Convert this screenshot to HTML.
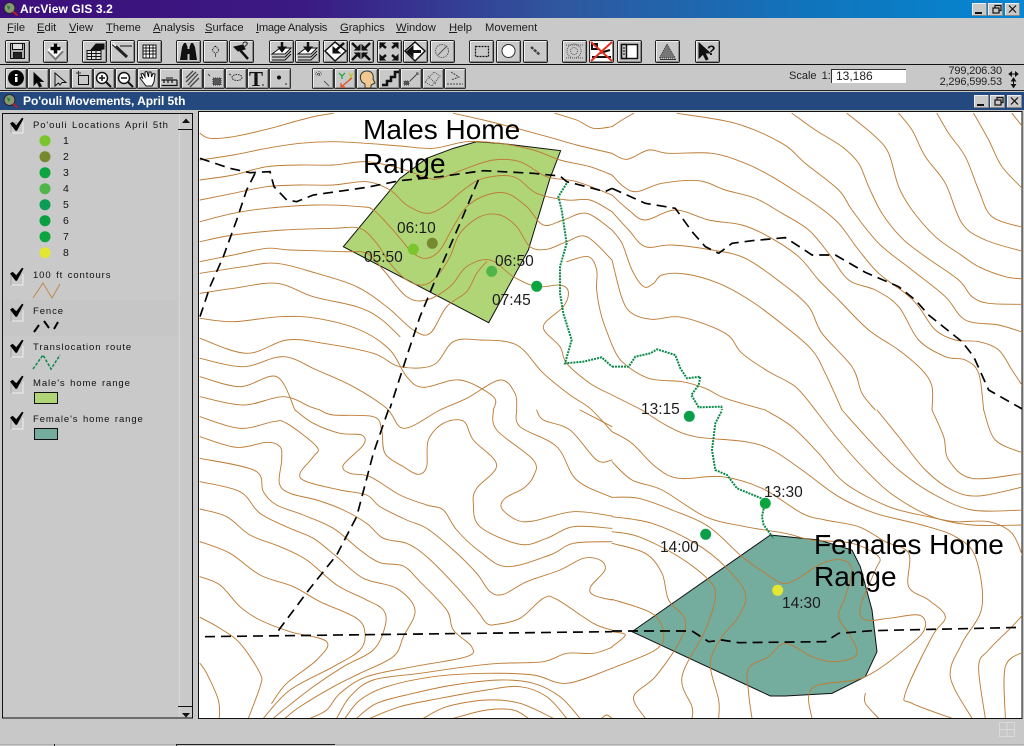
<!DOCTYPE html>
<html><head><meta charset="utf-8"><title>ArcView GIS 3.2</title>
<style>
html,body{margin:0;padding:0;width:1024px;height:746px;overflow:hidden;background:#c8c8c8}
body{position:relative;font-family:"Liberation Sans",sans-serif;color:#111}
.t{position:absolute;white-space:pre;line-height:1}
svg{position:absolute;left:0;top:0}
.m{font-size:11.2px;color:#1c1c1c;top:23px}
.m u{text-decoration-thickness:1px}
.l{font-size:9.5px;letter-spacing:.9px;word-spacing:1px;color:#111;left:33px}
.n{font-size:10.5px;left:63px;color:#111}
.big{font-size:28px;color:#000}
.s{font-size:15.5px;color:#1c1c1c}
</style></head><body>
<svg width="1024" height="746" viewBox="0 0 1024 746" xmlns="http://www.w3.org/2000/svg">
<defs>
<linearGradient id="tg" x1="0" x2="1" y1="0" y2="0"><stop offset="0" stop-color="#3d0f7a"/><stop offset=".3" stop-color="#3b1a84"/><stop offset=".55" stop-color="#2f589f"/><stop offset=".8" stop-color="#0f75bd"/><stop offset="1" stop-color="#0587d2"/></linearGradient>
<clipPath id="mapc"><rect x="199" y="112" width="823" height="606"/></clipPath>
<symbol id="b" viewBox="0 0 25 23" width="25" height="23" overflow="visible"><rect x=".5" y=".5" width="24" height="22" rx="1.5" fill="#c9c9c9" stroke="#222"/><path d="M1.5 21V1.5H23.5" fill="none" stroke="#efefef"/><path d="M2 21.5H23.5V2" fill="none" stroke="#8a8a8a"/></symbol>
<symbol id="c" viewBox="0 0 22 21" width="22" height="21" overflow="visible"><rect x=".5" y=".5" width="21" height="20" rx="1" fill="#c9c9c9" stroke="#333"/><path d="M1.5 19V1.5H20.5" fill="none" stroke="#eee"/><path d="M2 19.5H20.5V2" fill="none" stroke="#929292"/></symbol>
<symbol id="w" viewBox="0 0 15 13" width="15" height="13" overflow="visible"><rect x=".5" y=".5" width="14" height="12" fill="#c9c9c9" stroke="#888"/><path d="M.5 12V.5H14" fill="none" stroke="#eee"/></symbol>
<path id="ck" d="M-2 -1L.7 -2.700L4.300 .7L10 -6.700L11.500 -6L5 6.300H3.500Z" fill="#000"/>
</defs>

<!-- title bars -->
<rect width="1024" height="18" fill="url(#tg)"/>
<rect y="18" width="1024" height="46" fill="#c9c9c9"/>
<rect y="64" width="1024" height="1" fill="#111"/>
<rect y="90" width="1024" height="1" fill="#222"/>
<rect y="92" width="1024" height="18" fill="#23497f"/>
<g transform="translate(9.5,8)"><circle r="5.5" fill="#8a9a70" stroke="#223" /><path d="M-3-3 L1-1 L-1 2Z" fill="#2d7d3f"/><path d="M3.5 3.5L8 7.5" stroke="#b3202a" stroke-width="2"/></g>
<g transform="translate(9.5,100)"><circle r="5.5" fill="#8a9a70" stroke="#223" /><path d="M-3-3 L1-1 L-1 2Z" fill="#2d7d3f"/><path d="M3.5 3.5L8 7.5" stroke="#b3202a" stroke-width="2"/></g>
<use href="#w" x="972" y="3"/><use href="#w" x="988" y="3"/><use href="#w" x="1005" y="3"/>
<use href="#w" x="974" y="95"/><use href="#w" x="990" y="95"/><use href="#w" x="1007" y="95"/>
<g stroke="#111" fill="none" stroke-width="1.2">
<path d="M975 13h7" stroke-width="2"/><rect x="993" y="8" width="6" height="5"/><path d="M995 8V5.5h6v5h-2"/><path d="M1009 5.5l7 7m0-7l-7 7"/>
<path d="M977 105h7" stroke-width="2"/><rect x="995" y="100" width="6" height="5"/><path d="M997 100v-2.500h6v5h-2"/><path d="M1011 97.500l7 7m0-7l-7 7"/>
</g>

<!-- toolbar 1 buttons -->
<g>
<use href="#b" x="5" y="40"/><use href="#b" x="43" y="40"/><use href="#b" x="82" y="40"/><use href="#b" x="110" y="40"/><use href="#b" x="137" y="40"/>
<use href="#b" x="176" y="40"/><use href="#b" x="203" y="40"/><use href="#b" x="229" y="40"/>
<use href="#b" x="269" y="40"/><use href="#b" x="295" y="40"/><use href="#b" x="323" y="40"/><use href="#b" x="349" y="40"/><use href="#b" x="377" y="40"/><use href="#b" x="403" y="40"/><use href="#b" x="430" y="40"/>
<use href="#b" x="469" y="40"/><use href="#b" x="496" y="40"/><use href="#b" x="523" y="40"/>
<use href="#b" x="562" y="40"/><use href="#b" x="589" y="40"/><use href="#b" x="617" y="40"/><use href="#b" x="655" y="40"/><use href="#b" x="695" y="40"/>
</g>
<!-- toolbar 1 icons -->
<g fill="none" stroke="#111">
<path d="M10.500 43.500H24.500V58.500H10.500Z" fill="#aaa"/><rect x="12.500" y="43.500" width="10" height="6" fill="#ddd"/><rect x="13.500" y="52.500" width="8" height="6" fill="#222"/>
<path d="M48 52L55.500 44L63 52L55.500 60Z" fill="#777" stroke="#777"/><path d="M48 50L55.500 43L62 50L55.500 57Z" fill="#fff" stroke="#fff"/><path d="M55.500 43.500v10M50.500 48.500h10" stroke="#000" stroke-width="3.500"/>
<path d="M87 50.500H101V59.500H87Z" fill="#ddd"/><path d="M87 53.500h14M87 56.500h14M91.500 50.500v9M96 50.500v9"/><path d="M91 50L96 44H104V49L98 50Z" fill="#111"/>
<path d="M113 44L127 57" stroke-width="3" stroke="#222"/><path d="M120 46H132"/><path d="M113 43l3 3" stroke="#eee" stroke-width="2"/>
<rect x="143" y="45" width="13" height="13" fill="#fff"/><path d="M143 48h13M143 51h13M143 54h13M146 45v13M149.500 45v13M153 45v13" stroke-width=".9"/>
<g fill="#111" stroke="none"><path d="M180 60L182 47L184 43H186L187.500 47V60Z"/><path d="M189.500 60V47L191 43H193L195 47L197 60Z"/><rect x="186.500" y="49" width="4" height="5"/></g>
<path d="M215.500 46L219 50L215.500 54L212 50Z" stroke-dasharray="1 1"/><path d="M215.500 54v3" stroke="#555"/>
<path d="M234 47L243 45L245 49L238 51Z" fill="#111"/><path d="M240 50L248 59" stroke="#111" stroke-width="2.500"/>
</g>
<text x="242" y="49" font-family="Liberation Sans" font-size="11" fill="#111">?</text>
<g fill="none" stroke="#111">
<path d="M272 54L280 48H291L285 54Z" fill="#fff"/><path d="M272 57H285L291 51M272 60H285L291 54"/><path d="M282 42v8" stroke-width="2.500"/><path d="M278 47L282 52L286 47Z" fill="#111"/>
<path d="M298 54L306 48H317L311 54Z" fill="#fff"/><path d="M298 57H311L317 51M298 60H311L317 54"/><path d="M308 42v8" stroke-width="2.500"/><path d="M304 47L308 52L312 47Z" fill="#111"/>
<path d="M325 51L335 42L346 51L335 61Z" fill="#fff" stroke-width="1.500"/><path d="M344 43L334 52" stroke-width="2.500"/><path d="M333 47V53H340Z" fill="#111"/>
<path d="M352 43L359 50M370 43L363 50M352 60L359 53M370 60L363 53" stroke-width="2.500"/><path d="M360 45v5h-5ZM362 45v5h5ZM360 58v-5h-5ZM362 58v-5h5Z" fill="#111"/>
<path d="M386 48L380 43M392 48L398 43M386 55L380 60M392 55L398 60" stroke-width="2.500"/><path d="M380 43h5l-5 5ZM398 43h-5l5 5ZM380 60h5l-5-5ZM398 60h-5l5-5Z" fill="#111"/>
<path d="M405 51L415 42L425 51L415 61Z" fill="#fff" stroke-width="1.500"/><path d="M410 51.500H421" stroke-width="3"/><path d="M413 46L407 51.500L413 57Z" fill="#111"/>
<circle cx="442" cy="51" r="6.500" stroke="#555" stroke-dasharray="1.500 1"/><path d="M438 55L447 46" stroke="#555"/>
<rect x="475.500" y="46.500" width="13" height="10" stroke-dasharray="2 1" stroke="#111" stroke-width="1.200"/>
<circle cx="508.500" cy="51" r="6.500" fill="#fff" stroke="#333"/>
<path d="M531 47L540 55" stroke="#444" stroke-width="2.500" stroke-dasharray="3 1"/>
<g stroke="#555" stroke-dasharray="1 1"><circle cx="574" cy="51" r="7"/><circle cx="574" cy="51" r="3.500"/><path d="M566 45h17M566 58h17"/></g>
<rect x="591" y="42" width="21" height="19" fill="#fff" stroke="none"/><path d="M592 44h5v5h-5ZM592 57h19M600 53l10-3" stroke="#111" stroke-width="2"/><path d="M591 42L612 61M612 42L591 61" stroke="#e03020" stroke-width="2"/>
<rect x="621.500" y="44.500" width="16" height="14" fill="#fff" stroke-width="1.500"/><rect x="621.500" y="44.500" width="5" height="14" fill="#c9c9c9" stroke-width="1.500"/><path d="M623 48h2M623 51h2M623 54h2"/>
<path d="M659.500 58L667 44L675 58Z" fill="#777" stroke="#333" stroke-dasharray="1 1"/><path d="M660 59.500h16" stroke="#333"/>
<path d="M699 43V58L703 54L706 60L708 59L705 53H710Z" fill="#111" stroke="#111"/>
</g>
<text x="707" y="55" font-family="Liberation Sans" font-size="14" font-weight="bold" fill="#111">?</text>

<!-- toolbar 2 buttons -->
<g>
<use href="#c" x="5" y="68"/><use href="#c" x="27" y="68"/><use href="#c" x="49" y="68"/><use href="#c" x="71" y="68"/><use href="#c" x="93" y="68"/><use href="#c" x="115" y="68"/><use href="#c" x="137" y="68"/><use href="#c" x="159" y="68"/><use href="#c" x="181" y="68"/><use href="#c" x="203" y="68"/><use href="#c" x="225" y="68"/><use href="#c" x="247" y="68"/><use href="#c" x="269" y="68"/>
<use href="#c" x="312" y="68"/><use href="#c" x="334" y="68"/><use href="#c" x="356" y="68"/><use href="#c" x="378" y="68"/><use href="#c" x="400" y="68"/><use href="#c" x="422" y="68"/><use href="#c" x="444" y="68"/>
</g>
<g fill="none" stroke="#111">
<circle cx="16" cy="78" r="7.500" fill="#000"/><rect x="15" y="74" width="2.500" height="2" fill="#fff" stroke="none"/><rect x="15" y="77" width="2.500" height="5" fill="#fff" stroke="none"/>
<path d="M34 73V85L37 82L39.500 87L41.500 86L39 81.500H43Z" fill="#000"/>
<path d="M55 73V86L58.500 83L60 85L62 82.500H66Z" fill="#c9c9c9"/>
<rect x="78.500" y="75.500" width="10" height="9"/><path d="M76 73h5M78.500 71v5" stroke="#333"/>
<circle cx="102" cy="78" r="5.500" fill="#fff" stroke-width="1.500"/><path d="M99 78h6M102 75v6" stroke-width="1.500"/><path d="M106 82l5 5" stroke-width="2"/>
<circle cx="124" cy="78" r="5.500" fill="#fff" stroke-width="1.500"/><path d="M121 78h6" stroke-width="1.500"/><path d="M128 82l5 5" stroke-width="2"/>
<path d="M143 79L141 74L143 73.500L145 77L145 72L147 71.500L148.500 77L149 72L151 72L151.500 77L153 73.500L155 74L154 82L152 86H146L143 82L140 78L142 77Z" fill="#fff" stroke-width="1"/>
<path d="M161.500 80H177M161.500 85.500H177V80M164 80v3M168 80v3M172 80v3" stroke-width="1.200"/><path d="M166 78h7" stroke-width="1"/>
<path d="M186 82L196 72M188 85L198 74M186 78L193 71M190 87L199 78" stroke="#444" stroke-width="1.300"/>
<path d="M213 78h8v7h-8Z" fill="#555" stroke="#333" stroke-dasharray="1 1"/><path d="M208 74l2 2" stroke="#444"/>
<ellipse cx="237" cy="77.500" rx="5" ry="3" stroke-dasharray="1.500 1" stroke="#222"/><path d="M229 74l2 1" stroke="#444"/>
<circle cx="279" cy="77.500" r="1.500" fill="#111"/><path d="M285 84l2 0" stroke="#222"/>
<path d="M262 85h2" stroke="#222"/>
<g stroke="#555"><path d="M316 72l5 4m0-4l-5 4M319 71v6M315 74h8" stroke-dasharray="1 1"/><path d="M324 81l5 5"/></g>
<path d="M339 73l3 3m3-3l-3 3m0 0v3" stroke="#16a030" stroke-width="1.200"/><path d="M349 73l2 3m2-3l-4 7" stroke="#c8c020" stroke-width="1.200"/><path d="M352 78L341 87M341 83V87H345" stroke="#e44a20" stroke-width="1.200"/>
<path d="M362 82C358 76 362 71 367 71C372 71 374 75 373 79L375 83L371 85V88H365V84Z" fill="#f0c890" stroke="#333"/>
<path d="M382 85H387V81H391V77H395V72H399" stroke-width="2.500"/>
<path d="M404 85h5v-4h-5Z" fill="#555" stroke="#444" stroke-dasharray="1 1"/><path d="M410 81L417 74M416 73h2v2" stroke="#444"/>
<g stroke="#555" stroke-dasharray="1 1"><path d="M425 82L434 72L440 76L432 86Z"/><path d="M428 76L436 84"/></g>
<path d="M451 72L459 77L451 80M447 84h16" stroke="#444" stroke-dasharray="2 1"/>
</g>
<text x="249" y="86" font-family="Liberation Serif" font-size="21" font-weight="bold" fill="#111">T</text>

<!-- legend panel -->
<rect x="2.500" y="113.500" width="190" height="604.500" fill="#c9c9c9" stroke="#111"/>
<rect x="4" y="300" width="173" height="36" fill="#c6c6c6"/>
<path d="M179.500 114V717" stroke="#d8d8d8"/>
<path d="M178 129.500H192M178 706.500H192" stroke="#111"/>
<path d="M182 123h8l-4-4.500ZM182 713h8l-4 4.500Z" fill="#111"/>
<g fill="none" stroke="#eee"><path d="M23 122v11H12M23 274v11H12M23 310v11H12M23 346v11H12M23 382v11H12M23 418v11H12"/></g>
<g fill="none" stroke="#a5a5a5"><path d="M11 133v-10h11M11 285v-10h11M11 321v-10h11M11 357v-10h11M11 393v-10h11M11 429v-10h11"/></g>
<use href="#ck" x="12" y="124.500"/><use href="#ck" x="12" y="274.500"/><use href="#ck" x="12" y="310.500"/><use href="#ck" x="12" y="346.500"/><use href="#ck" x="12" y="382.500"/><use href="#ck" x="12" y="418.500"/>
<circle cx="45" cy="140.700" r="5.500" fill="#7ac52b"/><circle cx="45" cy="156.700" r="5.500" fill="#77892f"/><circle cx="45" cy="172.700" r="5.500" fill="#0ba43e"/><circle cx="45" cy="188.700" r="5.500" fill="#4fb548"/><circle cx="45" cy="204.700" r="5.500" fill="#0b9d55"/><circle cx="45" cy="220.700" r="5.500" fill="#0a9f40"/><circle cx="45" cy="236.700" r="5.500" fill="#0ba43e"/><circle cx="45" cy="252.700" r="5.500" fill="#e3e633"/>
<path d="M33 298L43 283L52 298L60 284" fill="none" stroke="#c08a4a"/>
<path d="M34 332L39 325M44 321L49 328M54 329L58 322" fill="none" stroke="#000" stroke-width="2"/>
<path d="M33 369L43 355L51 369L60 355" fill="none" stroke="#0a8a4a" stroke-width="1.500" stroke-dasharray="3 1.500"/>
<rect x="34.500" y="392.500" width="23" height="11" fill="#b0d577" stroke="#111"/>
<rect x="34.500" y="428.500" width="23" height="11" fill="#74ac9e" stroke="#111"/>

<!-- map -->
<rect x="198.500" y="111.500" width="823.500" height="607" fill="#fff" stroke="#111"/>
<g clip-path="url(#mapc)">
<polygon transform="translate(200,110) scale(.33333)" points="430,410 600,205 680,145 760,115 830,95 900,100 1082,122 1050,205 985,420 866,638" fill="#b0d577" stroke="#111" stroke-width="3"/>
<polygon transform="translate(612,410) scale(.33333)" points="60,665 475,375 620,390 720,420 745,470 780,600 795,725 760,800 660,850 520,858 475,858" fill="#74ac9e" stroke="#111" stroke-width="3"/>
<g id="contours" fill="none" stroke="#bd7c36" stroke-width="2.800" stroke-linejoin="round" stroke-linecap="round">
<g transform="translate(200,110) scale(.33333)">
<polyline points="0,70 30,85 100,80 200,58 290,33 350,18 400,10"/>
<polyline points="760,10 850,30 950,55 1060,85 1130,105 1236,130"/>
<polyline points="1065,10 1130,30 1180,55 1236,50"/>
<polyline points="0,150 100,135 200,115 300,100 400,95 500,100 600,108 700,115 800,95 900,100 1000,120 1080,150 1170,170 1236,195"/>
<polyline points="0,210 100,195 200,170 300,165 400,165 500,155 600,175 680,203 720,205 800,175 880,150 960,155 1040,200 1130,215 1236,255"/>
<polyline points="0,270 100,250 200,230 300,225 400,225 500,215 570,240 620,285 680,310 730,290 790,240 850,205 940,200 1010,250 1100,270 1170,270 1236,305"/>
<polyline points="0,335 100,310 200,295 350,285 480,290 520,300 570,350 600,385 640,430 680,445 720,420 760,350 800,290 860,255 920,250 980,290 1030,345 1090,330 1160,310 1236,360"/>
<polyline points="0,395 100,375 250,360 400,355 480,355 530,400 570,460 620,510 670,525 710,500 750,440 780,370 840,320 900,315 950,350 990,410 1040,418 1100,395 1160,380 1236,450"/>
<polyline points="0,455 100,435 200,415 270,420 430,425 500,430 550,480 620,560 680,570 750,530 800,470 870,450 940,500 1010,530 1080,525 1105,545 1090,590 1030,650 1080,710 1100,760 1170,820 1236,855"/>
<polyline points="1100,455 1165,440 1190,480 1190,540 1205,620 1236,705"/>
<polyline points="0,490 130,470 230,460 350,490 470,530 560,590 640,660 690,670 740,590 800,545 830,490 860,455"/>
<polyline points="0,550 100,535 230,520 340,560 470,590 540,625 600,680"/>
<polyline points="0,625 100,635 240,620 350,625 480,660 570,720 620,800 670,832 780,810 880,860 880,900"/>
<polyline points="0,685 140,730 260,690 370,700 520,730 600,770 700,765 760,695 840,690 950,705 1030,790 1110,855 1170,895 1236,965"/>
<polyline points="0,745 130,770 250,740 350,780 460,830 560,895 612,955 720,900 800,865 900,810 945,850 950,900"/>
<polyline points="0,800 120,830 230,800 285,900"/>
<polyline points="0,860 130,885 250,860 330,890 360,900"/>
</g>
<g transform="translate(612,110) scale(.33333)">
<polyline points="0,50 30,30 65,10"/>
<polyline points="195,10 370,40 510,100 580,160 680,240 720,300 800,400 900,480 1000,560 1060,630 1160,645 1236,668"/>
<polyline points="540,10 610,60 690,110 740,160 770,230 810,310 870,385 940,440 1040,510 1080,560 1130,580 1236,583"/>
<polyline points="705,10 790,80 830,130 860,230 900,300 970,380 1040,430 1100,470 1180,500 1236,507"/>
<polyline points="860,10 900,60 940,140 1000,220 1050,340 1120,390 1236,425"/>
<polyline points="975,10 1010,70 1060,140 1100,240 1140,320 1236,353"/>
<polyline points="1085,10 1130,90 1170,170 1236,240"/>
<polyline points="1200,10 1236,55"/>
<polyline points="0,130 45,148 110,120 170,130 300,130 400,160 480,200 560,250 620,290 680,340 740,420 800,490 880,550 920,590 970,660 1030,690 1100,695 1160,720 1200,780 1236,835"/>
<polyline points="0,195 35,230 75,245 150,220 260,212 340,240 430,265 510,310 590,360 650,430 710,510 790,540 860,590 920,690 1000,740 1060,750 1100,790 1115,900"/>
<polyline points="0,255 50,300 100,330 190,300 290,330 390,345 470,380 560,440 620,510 680,570 770,660 860,720 930,780 960,830 960,900"/>
<polyline points="0,305 50,360 100,410 180,405 300,420 400,445 510,520 590,590 630,670 720,770 750,850 790,900"/>
<polyline points="0,360 30,400 60,480 95,530 125,520 150,495 220,492 320,520 420,575 520,650 600,720 640,790 690,900"/>
<polyline points="0,450 30,565 60,610 120,628 210,622 340,670 390,730 470,785 550,830 610,900"/>
<polyline points="0,705 30,755 110,805 210,815 280,835 340,865 460,900"/>
<polyline points="0,855 90,900"/>
</g>
<g transform="translate(200,410) scale(.33333)">
<polyline points="0,20 120,55 220,35 260,40 350,110 340,140 300,190 320,215 420,240 500,255 540,290 620,330 680,355 760,420 830,490 870,545 910,553 980,515 1080,480 1150,445 1200,450 1215,480 1172,530 1180,555 1236,570"/>
<polyline points="0,80 110,112 200,97 240,110 245,150 238,220 270,250 350,270 430,300 500,340 550,385 620,400 680,440 760,520 830,600 860,640 890,643 960,625 1030,565 1070,568 1180,640 1236,660"/>
<polyline points="0,145 165,182 190,245 230,285 310,315 400,355 480,420 540,458 610,468 660,515 740,600 760,660 815,710 800,740 640,770 500,800 420,850 380,900 330,925"/>
<polyline points="0,215 120,245 180,310 270,355 340,385 410,440 490,505 590,535 645,600 610,680 580,740 480,790 400,830 300,890 255,925"/>
<polyline points="0,297 80,320 150,375 240,410 320,450 410,525 490,565 550,600 555,650 520,720 430,770 340,830 250,900 220,925"/>
<polyline points="0,395 90,430 180,495 280,530 360,575 470,625 495,670 480,720 400,770 270,840 190,925"/>
<polyline points="0,500 60,525 120,590 180,630 270,665 380,695 350,750 260,820 215,880"/>
<polyline points="0,622 60,655 120,700 180,790 180,830 145,925"/>
<polyline points="0,760 20,790 55,870 58,925"/>
<polyline points="285,0 340,40 420,70 485,75 490,105 430,165 450,190 510,200 600,255 680,285 730,300 770,360 840,425 920,470 1050,435 1120,400 1236,395"/>
<polyline points="360,0 400,15 520,20 545,60 555,130 610,170 655,193 680,170 685,90 730,40 790,33 820,90 890,165 830,235 820,280 840,350 960,403 1040,385 1120,350 1236,355"/>
<polyline points="880,0 890,60 1000,150 1000,200 970,235 915,265 905,295 950,330 1000,333 1120,305 1236,318"/>
<polyline points="950,0 960,50 1070,110 1130,210 1236,262"/>
<polyline points="1010,0 1030,30 1110,60 1190,150 1236,150"/>
<polyline points="1140,0 1236,50"/>
<polyline points="410,925 450,860 520,810 660,790 800,770 900,760 1030,755 1100,730 1180,730 1236,712"/>
<polyline points="435,925 480,870 560,830 700,800 860,790 1000,795 1100,820 1236,775"/>
<polyline points="470,925 530,880 640,850 760,825 900,810 1000,820 1080,860 1140,925"/>
<polyline points="510,925 600,890 720,865 860,840 960,830 1040,860 1100,925"/>
<polyline points="670,925 740,890 860,870 960,880 1060,925"/>
<polyline points="760,925 860,900 940,900 985,925"/>
<polyline points="1205,925 1220,915 1236,925"/>
</g>
<g transform="translate(612,410) scale(.33333)">
<polyline points="0,65 60,100 130,170 200,205 330,200 450,235 570,310 640,330 740,350 820,395 890,430 890,530 950,570 1000,620 960,680 880,850 900,880 1020,925"/>
<polyline points="90,0 170,50 250,80 400,95 480,120 570,180 680,260 790,310 930,345 1030,380 1090,440 1110,590 1050,700 1015,800 1080,925"/>
<polyline points="0,155 60,210 150,240 280,320 400,350 520,370 600,390 720,400 800,440 790,480 745,590 760,630 830,625 920,615 940,650 900,700 760,800 620,825 590,860 600,925"/>
<polyline points="460,0 540,50 620,130 700,220 830,290 950,320 1030,335 1130,335 1200,370 1236,450"/>
<polyline points="610,0 680,90 770,190 850,260 960,320 1080,345 1236,345"/>
<polyline points="690,0 780,100 860,180 960,250 1080,300 1236,300"/>
<polyline points="795,0 860,80 940,180 1020,240 1100,258 1236,230"/>
<polyline points="960,0 995,80 1010,150 1080,205 1236,190"/>
<polyline points="1115,0 1150,90 1236,130"/>
<polyline points="0,262 80,265 180,300 290,350 390,440 460,490 510,520 550,510 630,460 690,450 720,480 700,560 680,620 710,670 735,720 720,745 660,755 600,740 520,700 470,740 410,775 410,850 420,925"/>
<polyline points="0,320 120,340 250,400 340,470 400,550 380,620 330,680 295,760 320,870 320,925"/>
<polyline points="0,365 80,380 200,440 290,510 310,560 280,660 210,800 240,890 240,925"/>
<polyline points="0,400 100,430 150,490 170,570 220,630 200,700 130,800 65,860 100,925"/>
<polyline points="0,568 120,610 155,670 130,720 0,775"/>
<polyline points="0,710 40,675 0,665"/>
<polyline points="760,850 760,880 800,925"/>
<polyline points="1236,610 1200,650 1130,720 1100,770 1120,925"/>
<polyline points="1236,725 1180,770 1180,925"/>
</g>
</g>
<!-- route -->
<g fill="none" stroke="#0a8a4a" stroke-width="6" stroke-dasharray="6 3">
<polyline transform="translate(200,110) scale(.33333)" points="1100,220 1075,260 1085,300 1100,400 1080,470 1080,550 1090,610 1115,690 1095,760 1150,755 1205,742 1236,770"/>
<polyline transform="translate(612,110) scale(.33333)" points="0,770 50,770 70,740 115,730 135,718 190,735 205,775 225,805 265,800 260,825 238,855 260,892 328,890 330,900"/>
<polyline transform="translate(612,410) scale(.33333)" points="328,5 310,40 300,120 310,180 345,195 375,235 460,270 450,320 455,345 485,385"/>
</g>
<!-- fences -->
<g fill="none" stroke="#000" stroke-width="5" stroke-dasharray="30 18">
<polyline transform="translate(200,110) scale(.33333)" points="0,145 90,175 150,188 210,185 222,230 260,270 290,275 340,255 500,232 600,212 720,200 850,182 1000,190 1080,198 1100,215 1160,230 1215,245 1236,235"/>
<polyline transform="translate(612,110) scale(.33333)" points="0,235 100,280 190,295 240,365 280,410 320,430 360,400 420,392 520,383 570,415 600,435 670,435 760,487 860,530 910,570 950,615 1050,695 1085,740 1130,840 1236,900"/>
<polyline transform="translate(200,110) scale(.33333)" points="165,190 140,240 110,330 70,440 30,530 0,620"/>
<polyline transform="translate(200,110) scale(.33333)" points="835,210 780,340 710,500 660,620 620,740 570,895"/>
<polyline transform="translate(200,410) scale(.33333)" points="565,0 520,130 470,320 410,435 330,535 240,655 225,678"/>
<polyline transform="translate(200,410) scale(.33333)" points="15,680 1236,665"/>
<polyline transform="translate(612,410) scale(.33333)" points="0,663 240,663 290,695 330,690 380,698 640,695 680,670 780,662 1236,652"/>
</g>
<!-- points -->
<circle cx="413.300" cy="249.300" r="5.500" fill="#7ac52b"/>
<circle cx="432.300" cy="243.300" r="5.500" fill="#77892f"/>
<circle cx="491.700" cy="271.300" r="5.500" fill="#4fb548"/>
<circle cx="536.700" cy="286.300" r="5.500" fill="#0ba43e"/>
<circle cx="689.300" cy="416.300" r="5.500" fill="#0b9e4a"/>
<circle cx="765.300" cy="503.300" r="5.500" fill="#0ba43e"/>
<circle cx="705.700" cy="534.300" r="5.500" fill="#0a9f48"/>
<circle cx="777.700" cy="590.300" r="5.500" fill="#e3e633"/>
</g>
<!-- status -->
<path d="M0 744.500H1024" stroke="#b0b0b0"/>
<path d="M176 744.500H335" stroke="#222"/>
<path d="M54.500 744V746M176.500 744V746" stroke="#222"/>
<path d="M999.500 722.500H1014.500V736.500H999.500ZM1007 722v14M999 729.500h15" fill="none" stroke="#dadada"/>
<!-- scale -->
<rect x="831" y="69" width="75" height="14" fill="#fff"/><path d="M831.500 83V69.500H906" fill="none" stroke="#333"/>
<path d="M1009 74h9M1009 74l2.500-2v4ZM1018 74l-2.500-2v4Z" stroke="#111" fill="#111" stroke-width="1"/>
<path d="M1013.500 79v8M1013.500 78l-2 3h4ZM1013.500 87.500l-2-3h4Z" stroke="#111" fill="#111" stroke-width="1"/>
</svg>

<div class="t" style="left:20px;top:3px;font-size:12px;font-weight:bold;color:#fff;letter-spacing:.12px">ArcView GIS 3.2</div>
<div class="t m" style="left:7px"><u>F</u>ile</div>
<div class="t m" style="left:37px"><u>E</u>dit</div>
<div class="t m" style="left:69px"><u>V</u>iew</div>
<div class="t m" style="left:106px"><u>T</u>heme</div>
<div class="t m" style="left:153px"><u>A</u>nalysis</div>
<div class="t m" style="left:205px"><u>S</u>urface</div>
<div class="t m" style="left:256px;letter-spacing:-.3px"><u>I</u>mage Analysis</div>
<div class="t m" style="left:340px"><u>G</u>raphics</div>
<div class="t m" style="left:396px"><u>W</u>indow</div>
<div class="t m" style="left:449px"><u>H</u>elp</div>
<div class="t m" style="left:485px">Movement</div>
<div class="t" style="left:789px;top:71px;font-size:11px;color:#222;word-spacing:2px">Scale 1:</div>
<div class="t" style="left:836px;top:70px;font-size:12px;color:#222">13,186</div>
<div class="t" style="right:22px;top:66px;font-size:11px;letter-spacing:-.15px;color:#222">799,206.30</div>
<div class="t" style="right:22px;top:77px;font-size:11px;letter-spacing:-.15px;color:#222">2,296,599.53</div>
<div class="t" style="left:23px;top:95px;font-size:12px;font-weight:bold;color:#fff;letter-spacing:-.05px">Po'ouli Movements, April 5th</div>

<div class="t l" style="top:121px">Po'ouli Locations April 5th</div>
<div class="t n" style="top:136px">1</div><div class="t n" style="top:152px">2</div><div class="t n" style="top:168px">3</div><div class="t n" style="top:184px">4</div><div class="t n" style="top:200px">5</div><div class="t n" style="top:216px">6</div><div class="t n" style="top:232px">7</div><div class="t n" style="top:248px">8</div>
<div class="t l" style="top:271px">100 ft contours</div>
<div class="t l" style="top:307px">Fence</div>
<div class="t l" style="top:343px">Translocation route</div>
<div class="t l" style="top:379px">Male's home range</div>
<div class="t l" style="top:415px">Female's home range</div>

<div class="t big" style="left:363px;top:116px">Males Home</div>
<div class="t big" style="left:363px;top:150px">Range</div>
<div class="t big" style="left:814px;top:531px">Females Home</div>
<div class="t big" style="left:814px;top:563px">Range</div>
<div class="t s" style="left:397px;top:221px">06:10</div>
<div class="t s" style="left:364px;top:250px">05:50</div>
<div class="t s" style="left:495px;top:254px">06:50</div>
<div class="t s" style="left:492px;top:293px">07:45</div>
<div class="t s" style="left:641px;top:402px">13:15</div>
<div class="t s" style="left:764px;top:485px">13:30</div>
<div class="t s" style="left:660px;top:540px">14:00</div>
<div class="t s" style="left:782px;top:596px">14:30</div>
<script>
(function(){
var ns="http://www.w3.org/2000/svg";
var ls=document.querySelectorAll("#contours polyline");
for(var i=0;i<ls.length;i++){
var e=ls[i],n=e.getAttribute("points").trim().split(/\s+/).map(function(s){return s.split(",").map(Number)});
var d="M"+n[0][0]+" "+n[0][1];
for(var k=0;k<n.length-1;k++){
var a=n[k-1]||n[k],b=n[k],c=n[k+1],f=n[k+2]||c;
d+="C"+(b[0]+(c[0]-a[0])/6).toFixed(1)+" "+(b[1]+(c[1]-a[1])/6).toFixed(1)+" "+(c[0]-(f[0]-b[0])/6).toFixed(1)+" "+(c[1]-(f[1]-b[1])/6).toFixed(1)+" "+c[0]+" "+c[1];
}
var p=document.createElementNS(ns,"path");p.setAttribute("d",d);e.parentNode.replaceChild(p,e);
}
})();
</script>
</body></html>
